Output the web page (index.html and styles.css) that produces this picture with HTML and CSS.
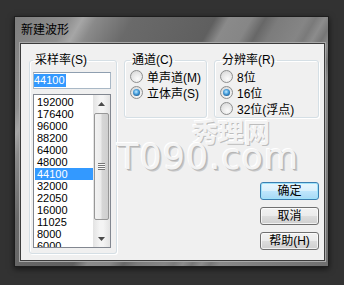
FILE: index.html
```html
<!DOCTYPE html>
<html>
<head>
  <meta charset="UTF-8">
  <title>新建波形</title>
  <link rel="stylesheet" href="styles.css">
</head>
<body>
  <div class="window">
    <div class="title">新建波形</div>
    <div class="client">
      <fieldset class="group group-rate">
        <legend>采样率(S)</legend>
        <div class="textbox"><span class="sel">44100</span></div>
        <div class="listbox">
          <ul class="items">
            <li>192000</li>
            <li>176400</li>
            <li>96000</li>
            <li>88200</li>
            <li>64000</li>
            <li>48000</li>
            <li class="selected">44100</li>
            <li>32000</li>
            <li>22050</li>
            <li>16000</li>
            <li>11025</li>
            <li>8000</li>
            <li>6000</li>
          </ul>
          <div class="scrollbar">
            <div class="sb-btn">
              <svg width="7" height="4" viewBox="0 0 7 4"><path d="M0 4 L3.5 0 L7 4 Z" fill="#4a4a4a"/></svg>
            </div>
            <div class="sb-thumb"><span class="grip"></span></div>
            <div class="sb-track"></div>
            <div class="sb-btn">
              <svg width="7" height="4" viewBox="0 0 7 4"><path d="M0 0 L7 0 L3.5 4 Z" fill="#4a4a4a"/></svg>
            </div>
          </div>
        </div>
      </fieldset>

      <div class="side">
        <div class="groups">
          <fieldset class="group group-channel">
            <legend>通道(C)</legend>
            <label class="option"><span class="radio"></span>单声道(M)</label>
            <label class="option"><span class="radio checked"></span>立体声(S)</label>
          </fieldset>
          <fieldset class="group group-bits">
            <legend>分辨率(R)</legend>
            <label class="option"><span class="radio"></span>8位</label>
            <label class="option"><span class="radio checked"></span>16位</label>
            <label class="option"><span class="radio"></span>32位(浮点)</label>
          </fieldset>
        </div>
        <div class="buttons">
          <button class="btn btn-default">确定</button>
          <button class="btn">取消</button>
          <button class="btn">帮助(H)</button>
        </div>
      </div>

      <div class="watermark">
        <span class="wm-cn">秀理网</span>
        <span class="wm-en">T090.com</span>
      </div>
    </div>
  </div>
</body>
</html>
```

FILE: styles.css
```css
body { margin: 0; width: 344px; height: 285px; background: #323232; font-family: "Liberation Sans", "Noto Sans CJK SC", sans-serif; font-size: 12px; color: #000; overflow: hidden; }

/* window frame */
.window { box-sizing: border-box; width: 315px; height: 251px; margin: 16px 0 0 14px; padding: 0 3px 5px 5px; display: flex; flex-direction: column; border: 1px solid #1e1e1e; box-shadow: 0 2px 6px rgba(0, 0, 0, 0.6);
  background: linear-gradient(120deg, #7e7e7e 0%, #8e8e8e 12%, #a6a6a6 15%, #8a8a8a 18%, #6a6a6a 26%, #5f5f5f 44%, #8a8a8a 47%, #868686 52%, #676767 55%, #7c7c7c 58%, #858585 64%, #7a7a7a 66%, #8c8c8c 68%, #767676 70%, #8c8c8c 72%, #767676 74%, #888 76%, #6f6f6f 100%); }
.title { height: 26px; line-height: 26px; padding-left: 1px; font-size: 12px; }
.client { position: relative; flex: 1; display: flex; align-items: flex-start; padding: 9px 0 0 8px; background: #f0f0f0; border: 1px solid #3c3c3c; box-shadow: 0 0 0 1px #a8a8a8; }

/* group boxes */
.group { box-sizing: border-box; margin: 0; border: 1px solid #d5dfe5; border-radius: 3px; box-shadow: inset 1px 1px 0 #fff, 1px 1px 0 #fff; }
.group legend { padding: 0 2px; line-height: 14px; font-size: 12px; }
.group-rate { width: 88px; height: 201px; padding: 0 3px; }
.group-channel { width: 81px; height: 65px; padding: 1px 5px 0; }
.group-bits { width: 105px; height: 65px; padding: 1px 5px 0; margin-left: 7px; }

/* sample rate */
.textbox { box-sizing: border-box; width: 78px; height: 17px; margin-top: 5px; padding-top: 1px; background: #fff; border: 1px solid #a9b8c6; border-top-color: #8f9fb0; font-size: 11px; }
.textbox .sel { display: inline-block; line-height: 13px; padding: 0 1px 0 0; background: #3399ff; color: #fff; }
.listbox { box-sizing: border-box; display: flex; width: 78px; height: 154px; margin-top: 5px; background: #fff; border: 1px solid #828790; }
.items { flex: 1; margin: 0; padding: 1px 0 0; list-style: none; overflow: hidden; font-size: 11px; }
.items li { height: 12px; line-height: 12px; padding-left: 2px; margin-left: 1px; }
.items li.selected { background: #3399ff; color: #fff; }

.scrollbar { width: 17px; display: flex; flex-direction: column; background: linear-gradient(90deg, #e3e3e3, #f4f4f4 40%, #f4f4f4 60%, #e3e3e3); }
.sb-btn { height: 17px; display: flex; align-items: center; justify-content: center; }
.sb-thumb { box-sizing: border-box; height: 107px; margin: 1px 1px 0; display: flex; align-items: center; justify-content: center; border: 1px solid #979797; border-radius: 2px; background: linear-gradient(90deg, #f2f2f2, #ebebeb 45%, #d6d6d6 55%, #cfcfcf); }
.sb-thumb .grip { width: 7px; height: 7px; background: repeating-linear-gradient(180deg, #777 0 1px, #f8f8f8 1px 2px); }
.sb-track { flex: 1; }

/* right side */
.side { margin-left: 7px; display: flex; flex-direction: column; align-items: flex-end; }
.groups { display: flex; }
.option { display: flex; align-items: center; height: 16px; white-space: nowrap; }
.radio { box-sizing: border-box; width: 13px; height: 13px; margin-right: 4px; display: flex; align-items: center; justify-content: center; border: 1px solid #8e8f8f; border-radius: 50%; background: radial-gradient(circle at 60% 70%, #fbfbfb 0, #e6e6e6 55%, #cfcfcf 100%); }
.radio.checked::after { content: ""; width: 7px; height: 7px; border-radius: 50%; background: radial-gradient(circle at 45% 40%, #c6ecff 0, #4ca3e0 40%, #17588f 80%, #0b3458 100%); }

.buttons { display: flex; flex-direction: column; margin-top: 64px; }
.btn { box-sizing: border-box; width: 59px; height: 18px; margin: 0 0 7px; padding: 0; font-family: inherit; font-size: 12px; line-height: 16px; color: #000; border: 1px solid #707070; border-radius: 3px; background: linear-gradient(180deg, #f2f2f2 0, #ebebeb 50%, #dddddd 51%, #cfcfcf 100%); box-shadow: inset 0 0 0 1px rgba(255, 255, 255, 0.7); }
.btn-default { border-color: #3c7fb1; box-shadow: inset 0 0 0 1px #9fe3fb; background: linear-gradient(180deg, #eaf6fd 0, #d9f0fc 50%, #bee6fd 51%, #a7d9f5 100%); }

/* embossed watermark on top of the dialog */
.watermark { position: absolute; left: 96px; top: 76px; width: 153px; pointer-events: none; color: #f3f3f3; }
.wm-cn { display: block; text-align: right; font-family: "Noto Sans CJK SC", sans-serif; font-size: 26px; line-height: 22px; font-weight: bold; text-shadow: 1px 1px 0 #bdbdbd, -1px -1px 0 #fff; }
.wm-en { display: block; font-family: "DejaVu Sans", sans-serif; font-size: 35px; line-height: 30px; letter-spacing: 1px; white-space: nowrap; text-shadow: 1px 1px 0 #b5b5b5, 2px 2px 0 #cacaca, -1px -1px 0 #fff; }
```
